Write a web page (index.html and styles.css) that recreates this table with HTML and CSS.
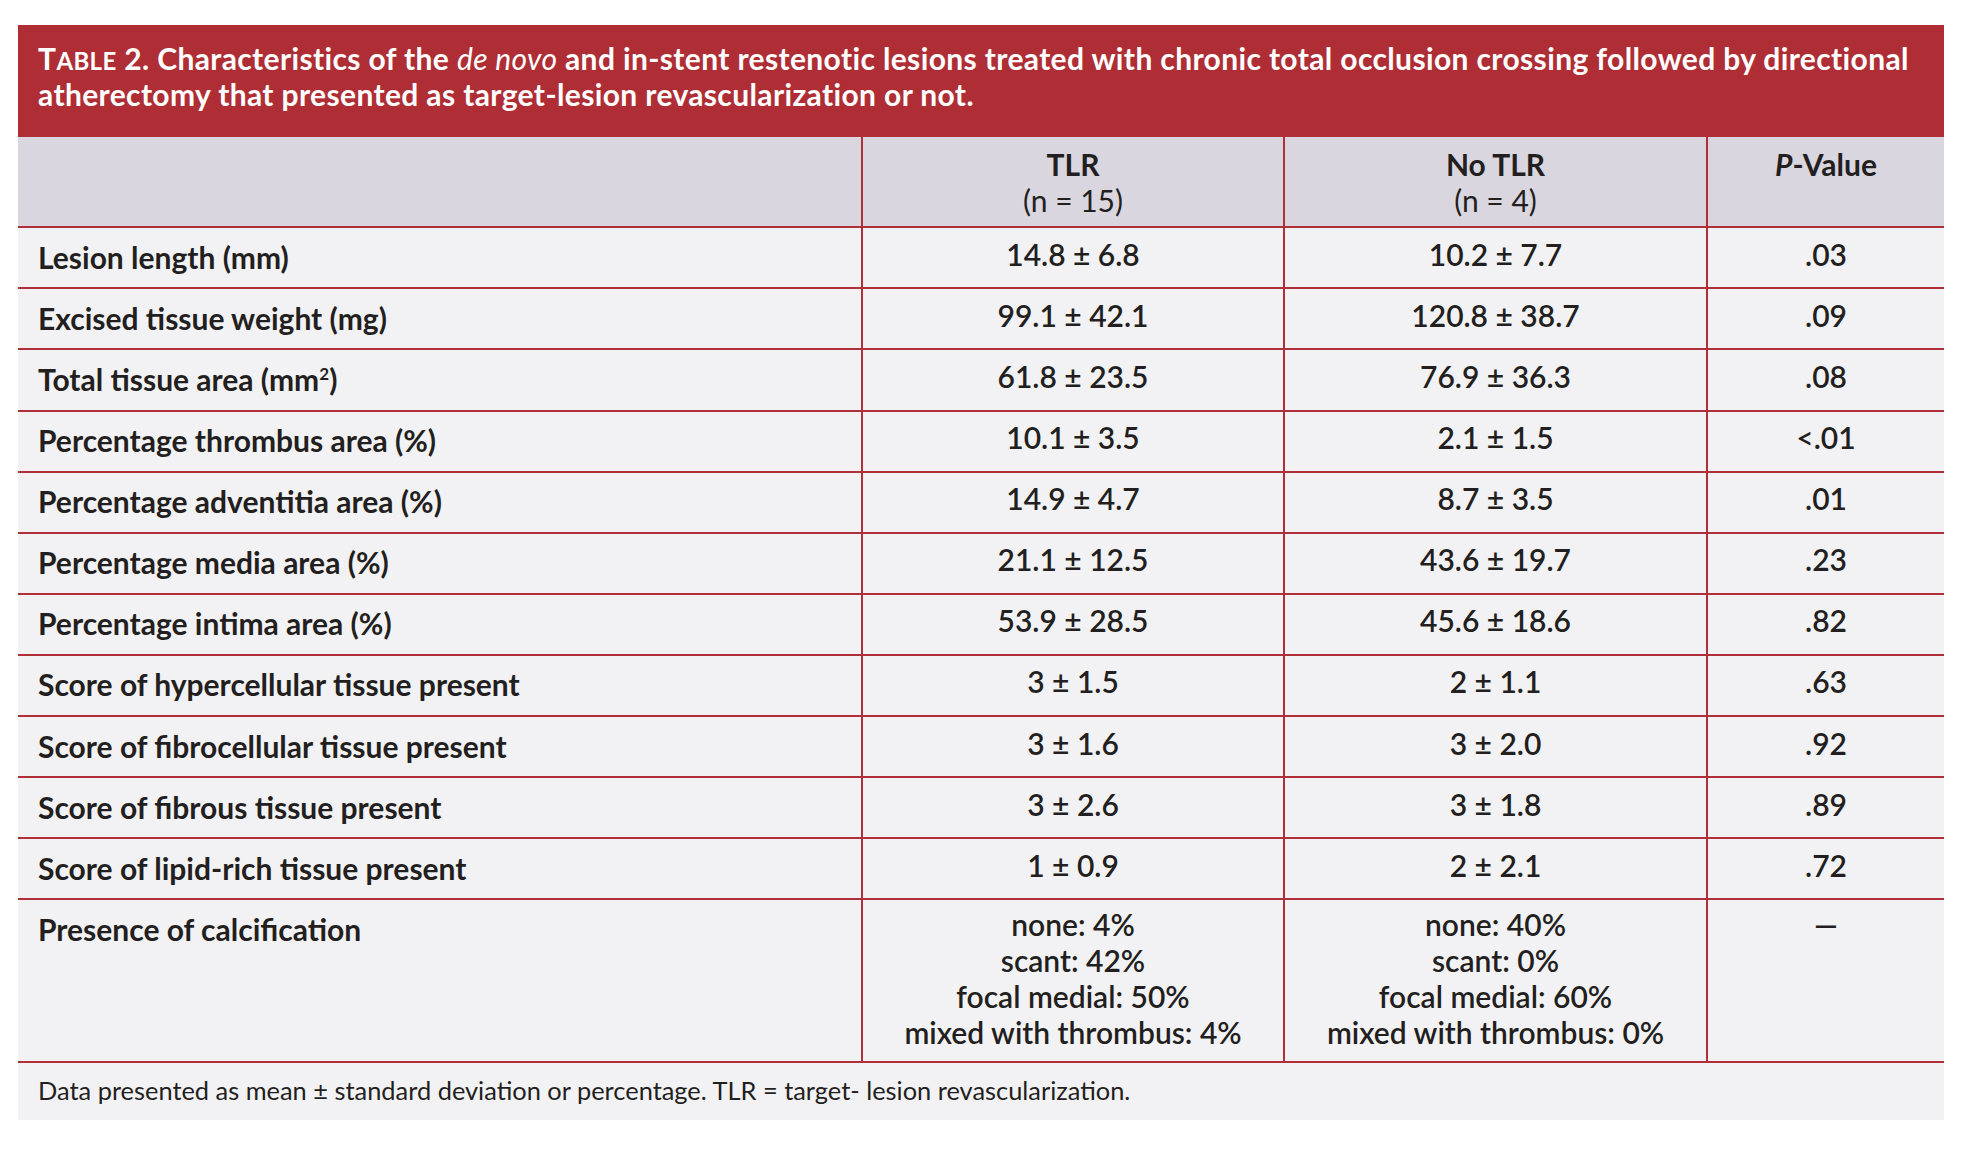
FILE: index.html
```html
<!DOCTYPE html>
<html lang="en">
<head>
<meta charset="utf-8">
<title>Table 2</title>
<link rel="stylesheet" href="styles.css">
</head>
<body>
<div class="figure">
  <div class="caption"><span class="sc">T<span class="small">ABLE</span> 2.</span> Characteristics of the <em>de novo</em> and in-stent restenotic lesions treated with chronic total occlusion crossing followed by directional<br>atherectomy that presented as target-lesion revascularization or not.</div>
  <div class="grid">
    <div class="row head">
      <div class="cell label"></div>
      <div class="cell val"><b>TLR</b><br>(n = 15)</div>
      <div class="cell val"><b>No TLR</b><br>(n = 4)</div>
      <div class="cell val"><b><i>P</i>-Value</b></div>
    </div>
    <div class="row"><div class="cell label">Lesion length (mm)</div><div class="cell val">14.8 ± 6.8</div><div class="cell val">10.2 ± 7.7</div><div class="cell val">.03</div></div>
    <div class="row"><div class="cell label">Excised tissue weight (mg)</div><div class="cell val">99.1 ± 42.1</div><div class="cell val">120.8 ± 38.7</div><div class="cell val">.09</div></div>
    <div class="row"><div class="cell label">Total tissue area (mm<sup>2</sup>)</div><div class="cell val">61.8 ± 23.5</div><div class="cell val">76.9 ± 36.3</div><div class="cell val">.08</div></div>
    <div class="row"><div class="cell label">Percentage thrombus area (%)</div><div class="cell val">10.1 ± 3.5</div><div class="cell val">2.1 ± 1.5</div><div class="cell val">&lt;.01</div></div>
    <div class="row"><div class="cell label">Percentage adventitia area (%)</div><div class="cell val">14.9 ± 4.7</div><div class="cell val">8.7 ± 3.5</div><div class="cell val">.01</div></div>
    <div class="row"><div class="cell label">Percentage media area (%)</div><div class="cell val">21.1 ± 12.5</div><div class="cell val">43.6 ± 19.7</div><div class="cell val">.23</div></div>
    <div class="row"><div class="cell label">Percentage intima area (%)</div><div class="cell val">53.9 ± 28.5</div><div class="cell val">45.6 ± 18.6</div><div class="cell val">.82</div></div>
    <div class="row"><div class="cell label">Score of hypercellular tissue present</div><div class="cell val">3 ± 1.5</div><div class="cell val">2 ± 1.1</div><div class="cell val">.63</div></div>
    <div class="row"><div class="cell label">Score of fibrocellular tissue present</div><div class="cell val">3 ± 1.6</div><div class="cell val">3 ± 2.0</div><div class="cell val">.92</div></div>
    <div class="row"><div class="cell label">Score of fibrous tissue present</div><div class="cell val">3 ± 2.6</div><div class="cell val">3 ± 1.8</div><div class="cell val">.89</div></div>
    <div class="row"><div class="cell label">Score of lipid-rich tissue present</div><div class="cell val">1 ± 0.9</div><div class="cell val">2 ± 2.1</div><div class="cell val">.72</div></div>
    <div class="row tall">
      <div class="cell label">Presence of calcification</div>
      <div class="cell val">none: 4%<br>scant: 42%<br>focal medial: 50%<br>mixed with thrombus: 4%</div>
      <div class="cell val">none: 40%<br>scant: 0%<br>focal medial: 60%<br>mixed with thrombus: 0%</div>
      <div class="cell val">—</div>
    </div>
  </div>
  <div class="note">Data presented as mean ± standard deviation or percentage. TLR = target- lesion revascularization.</div>
</div>
</body>
</html>
```
FILE: styles.css
```css
html, body {
  margin: 0;
  padding: 0;
  background: #ffffff;
}

body {
  font-family: Lato, "Open Sans", sans-serif;
  color: #231f20;
}

.figure {
  width: 1926px;
  margin: 25px 0 0 18px;
}

.caption {
  background: #af2e35;
  color: #ffffff;
  font-size: 30px;
  line-height: 36px;
  height: 72px;
  font-weight: 700;
  letter-spacing: 0.37px;
  padding: 15px 20px 25px 20px;
  white-space: nowrap;
}

.caption .small {
  font-size: 24px;
  line-height: 1;
}

.caption em {
  font-style: italic;
  font-weight: 400;
}

.grid {
  background: #f2f2f4;
}

.row {
  display: grid;
  grid-template-columns: 843px 422px 423px 238px;
  border-bottom: 2px solid #b0303a;
  height: 59.1px;
}

.cell {
  font-size: 30px;
  line-height: 36px;
  white-space: nowrap;
}

.cell + .cell {
  border-left: 2px solid #b0303a;
}

.label {
  font-weight: 700;
  padding: 10.5px 20px 0 20px;
}

.label sup {
  font-size: 17px;
  line-height: 0;
  vertical-align: 11px;
}

.val {
  font-weight: 600;
  text-align: center;
  padding: 7.5px 0 0 0;
}

.head {
  background: #d9d6df;
  height: 89.3px;
}

.head .cell {
  padding: 9px 0 0 0;
  font-weight: 400;
}

.head .cell b {
  font-weight: 700;
}

.tall {
  height: 160.7px;
}

.tall .label {
  padding-top: 10.5px;
}

.tall .val {
  padding-top: 6px;
}

.note {
  background: #f2f2f4;
  font-size: 25.4px;
  line-height: 30px;
  font-weight: 400;
  padding: 12px 20px 15px 20px;
  height: 30px;
}
```
